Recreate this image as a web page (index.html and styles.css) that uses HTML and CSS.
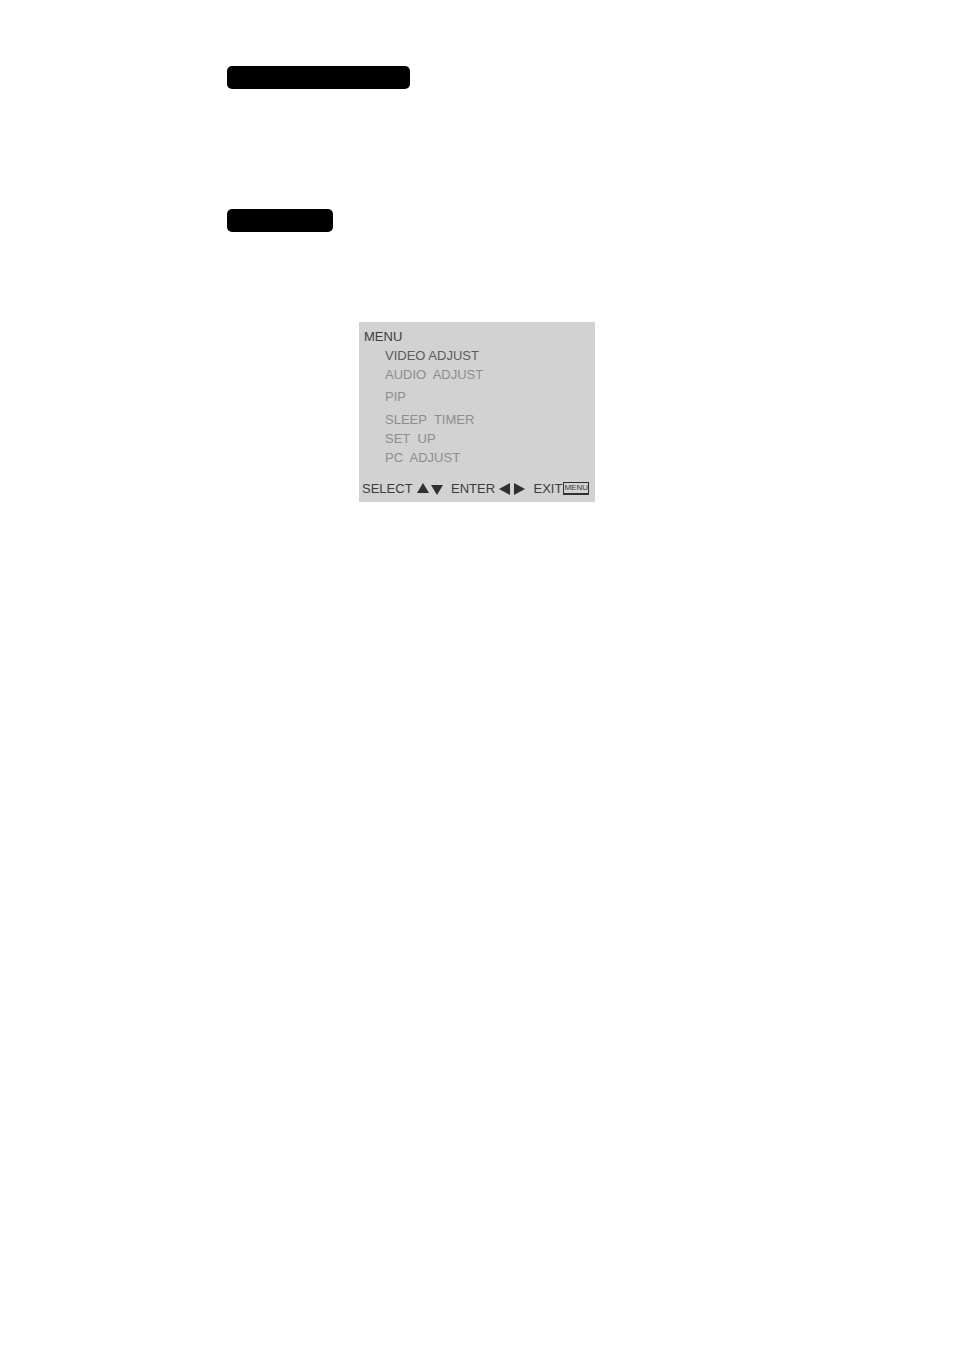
FILE: index.html
```html
<!DOCTYPE html>
<html lang="en">
<head>
<meta charset="utf-8">
<meta name="viewport" content="width=device-width, initial-scale=1">
<title>Menu</title>
<link rel="stylesheet" href="styles.css">
</head>
<body>
<main class="page">
  <div class="bar bar-long"></div>
  <div class="bar bar-short"></div>
  <section class="osd">
    <h1 class="osd-title">MENU</h1>
    <ul class="osd-list">
      <li class="selected">VIDEO ADJUST</li>
      <li>AUDIO&nbsp; ADJUST</li>
      <li class="roomy">PIP</li>
      <li>SLEEP&nbsp; TIMER</li>
      <li>SET&nbsp; UP</li>
      <li>PC&nbsp; ADJUST</li>
    </ul>
    <footer class="osd-keys">
      <span class="key">SELECT
        <svg width="26" height="12" viewBox="0 0 26 12" aria-hidden="true"><path d="M6 0L12 10H0zM14 2H26L20 12z"/></svg>
      </span>
      <span class="key">ENTER
        <svg width="26" height="12" viewBox="0 0 26 12" aria-hidden="true"><path d="M11 0V12L0 6zM15 0V12L26 6z"/></svg>
      </span>
      <span class="key key-exit">EXIT <span class="keycap">MENU</span></span>
    </footer>
  </section>
</main>
</body>
</html>
```
FILE: styles.css
```css
body {
  margin: 0;
  background: #fff;
  font-family: "Liberation Sans", Arial, sans-serif;
}

.page {
  display: flex;
  flex-direction: column;
  padding-top: 66px;
}

.bar {
  height: 23px;
  margin-left: 227px;
  border-radius: 5px;
  background: #000;
}

.bar-long {
  width: 183px;
}

.bar-short {
  width: 106px;
  margin-top: 120px;
}

.osd {
  align-self: center;
  box-sizing: border-box;
  width: 236px;
  margin-top: 90px;
  padding: 5px 6px 4px 3px;
  background: #d2d2d2;
  color: #3c3c3c;
  font-size: 13px;
  line-height: 19px;
}

.osd-title {
  margin: 0;
  padding-left: 2px;
  font-size: 13px;
  font-weight: 400;
}

.osd-list {
  margin: 0;
  padding: 0 0 0 23px;
  list-style: none;
  color: #8e8e8e;
}

.selected {
  color: #5c5c5c;
}

.roomy {
  line-height: 26px;
}

.osd-keys {
  display: flex;
  justify-content: space-between;
  padding-top: 12px;
}

.key {
  display: flex;
  align-items: center;
  gap: 4px;
}

.key svg {
  fill: #303030;
}

.key-exit {
  gap: 1px;
}

.keycap {
  border: 1px solid #303030;
  border-bottom-width: 2px;
  font-size: 8px;
  line-height: 10px;
}
```
